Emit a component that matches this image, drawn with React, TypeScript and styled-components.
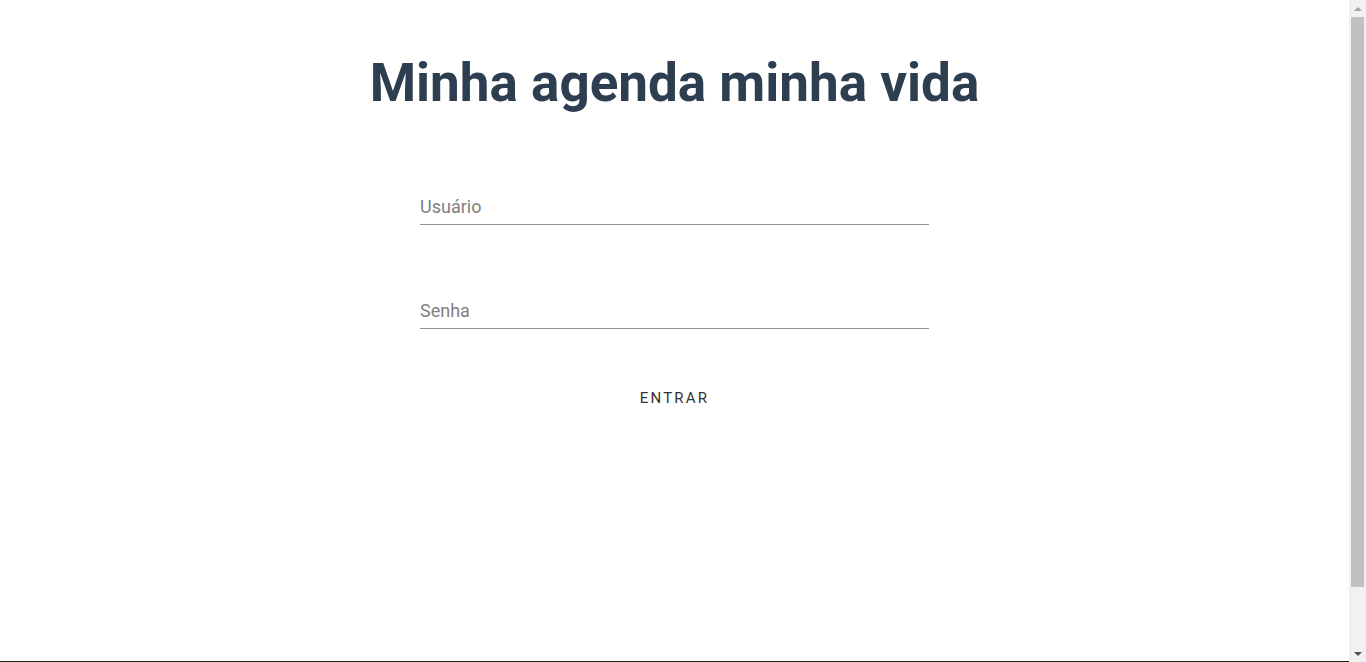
import styled, { createGlobalStyle } from 'styled-components'

const GlobalStyle = createGlobalStyle`
  html, body {
    margin: 0;
    padding: 0;
    background: #ffffff;
  }
  body {
    font-family: Roboto, "Liberation Sans", Arial, sans-serif;
  }
`

const Shell = styled.div`
  margin-right: 17px;
`

const Page = styled.div`
  min-height: 661px;
  display: flex;
  flex-direction: column;
  align-items: center;
  padding-top: 48px;
  box-sizing: border-box;
`

const Title = styled.h1`
  margin: 0;
  font-family: Roboto, "Liberation Sans", sans-serif;
  font-weight: 700;
  font-size: 53px;
  line-height: 70px;
  color: #2c3e50;
`

const Form = styled.form`
  width: 509px;
  margin-top: 74px;
  display: flex;
  flex-direction: column;
`

const Field = styled.div`
  height: 104px;
  display: flex;
  flex-direction: column;
`

const Input = styled.input`
  border: none;
  border-bottom: 1px solid #949494;
  outline: none;
  padding: 0 0 4px;
  height: 28px;
  font-family: Roboto, "Liberation Sans", sans-serif;
  font-size: 18px;
  color: #333;
  background: transparent;

  &::placeholder {
    color: #808080;
  }
`

const Actions = styled.div`
  display: flex;
  justify-content: center;
  margin-top: -20px;
`

const Button = styled.button`
  border: none;
  background: transparent;
  font-family: Roboto, "Liberation Sans", sans-serif;
  font-size: 15px;
  letter-spacing: 0.15em;
  text-transform: uppercase;
  color: #333;
  padding: 0 16px;
  height: 36px;
  cursor: pointer;
`

const Footer = styled.div`
  height: 68px;
  border-top: 1px solid #222;
`

/* fake browser scrollbar, drawn over the right edge */
const Scrollbar = styled.div`
  position: fixed;
  top: 0;
  right: 0;
  width: 17px;
  height: 100vh;
  background: #f1f1f1;
  display: flex;
  flex-direction: column;
  align-items: center;
`

const Arrow = styled.div<{ $down?: boolean }>`
  height: 17px;
  width: 17px;
  display: flex;
  align-items: center;
  justify-content: center;

  &::before {
    content: '';
    width: 0;
    height: 0;
    border-left: 4px solid transparent;
    border-right: 4px solid transparent;
    ${p => p.$down
      ? 'border-top: 4px solid #505050;'
      : 'border-bottom: 4px solid #a3a3a3;'}
  }
`

const Track = styled.div`
  flex: 1;
  width: 100%;
  padding: 0 2px;
  box-sizing: border-box;
`

const Thumb = styled.div`
  height: 570px;
  background: #c1c1c1;
`

export default function App() {
  return (
    <>
      <GlobalStyle />
      <Shell>
        <Page>
          <Title>Minha agenda minha vida</Title>
          <Form onSubmit={e => e.preventDefault()}>
            <Field>
              <Input type="text" placeholder="Usuário" />
            </Field>
            <Field>
              <Input type="password" placeholder="Senha" />
            </Field>
            <Actions>
              <Button type="submit">Entrar</Button>
            </Actions>
          </Form>
        </Page>
        <Footer />
      </Shell>
      <Scrollbar>
        <Arrow />
        <Track>
          <Thumb />
        </Track>
        <Arrow $down />
      </Scrollbar>
    </>
  )
}
